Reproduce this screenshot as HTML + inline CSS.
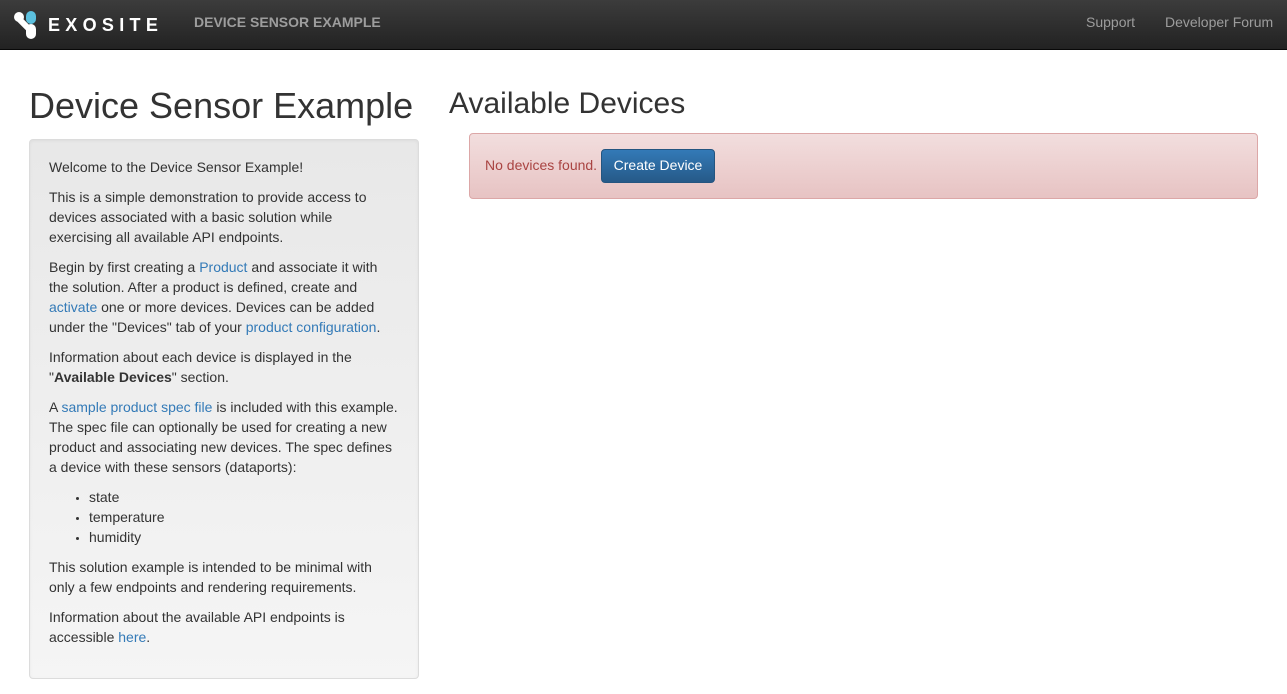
<!DOCTYPE html>
<html><head><style>
*{box-sizing:border-box}
body{margin:0;font-family:"Liberation Sans",sans-serif;font-size:14px;line-height:20px;color:#333;background:#fff;width:1287px;height:694px;overflow:hidden}
.nav{height:50px;background:linear-gradient(#3c3c3c,#222);border-bottom:1px solid #080808;position:relative}
.brand{position:absolute;left:48px;top:13px;color:#fff;font-size:18px;letter-spacing:5.3px;font-weight:bold;line-height:24px}
.title{position:absolute;left:194px;top:12px;color:#9d9d9d;font-weight:bold;font-size:14px;line-height:20px}
.right{position:absolute;top:12px;color:#9d9d9d}
h1{position:absolute;left:29px;top:84px;margin:0;font-size:36px;font-weight:500;line-height:44px;color:#333}
h2{position:absolute;left:449px;top:86px;margin:0;font-size:30px;font-weight:500;line-height:36px}
.well{position:absolute;left:29px;top:139px;width:390px;height:540px;border:1px solid #dcdcdc;border-radius:4px;background:linear-gradient(#e8e8e8,#f5f5f5);padding:17px 19px;box-shadow:inset 0 1px 3px rgba(0,0,0,.05)}
.well p{margin:0 0 10px}
a{color:#337ab7;text-decoration:none}
ul{margin:0 0 10px;padding-left:40px;list-style:none}
li{position:relative}
li:before{content:"";position:absolute;left:-13px;top:10px;width:3px;height:3px;background:#333;border-radius:50%}
.alert{position:absolute;left:469px;top:133px;width:789px;height:66px;border:1px solid #dca7a7;border-radius:4px;background:linear-gradient(#f2dede,#e7c3c3);color:#a94442;padding:21px 15px}
.btn{position:absolute;left:131px;top:15px;width:114px;height:34px;border:1px solid #245580;border-radius:4px;background:linear-gradient(#337ab7,#265a88);color:#fff;text-align:center;line-height:30px}
</style></head><body>
<div class="nav">
<svg style="position:absolute;left:13px;top:10px" width="24" height="30" viewBox="0 0 24 30"><circle cx="6" cy="7" r="5" fill="#fff"/><rect x="13" y="1" width="10" height="13" rx="5" fill="#5bc0de"/><rect x="13" y="14" width="10" height="15" rx="5" fill="#fff"/><path d="M6 9 L17 20" stroke="#fff" stroke-width="6"/></svg>
<div class="brand">EXOSITE</div>
<div class="title">DEVICE SENSOR EXAMPLE</div>
<div class="right" style="left:1086px">Support</div>
<div class="right" style="left:1165px">Developer Forum</div>
</div>
<h1>Device Sensor Example</h1>
<div class="well">
<p>Welcome to the Device Sensor Example!</p>
<p>This is a simple demonstration to provide access to devices associated with a basic solution while exercising all available API endpoints.</p>
<p>Begin by first creating a <a>Product</a> and associate it with the solution. After a product is defined, create and <a>activate</a> one or more devices. Devices can be added under the "Devices" tab of your <a>product configuration</a>.</p>
<p>Information about each device is displayed in the "<b>Available Devices</b>" section.</p>
<p>A <a>sample product spec file</a> is included with this example. The spec file can optionally be used for creating a new product and associating new devices. The spec defines a device with these sensors (dataports):</p>
<ul><li>state</li><li>temperature</li><li>humidity</li></ul>
<p>This solution example is intended to be minimal with only a few endpoints and rendering requirements.</p>
<p>Information about the available API endpoints is accessible <a>here</a>.</p>
</div>
<h2>Available Devices</h2>
<div class="alert">No devices found.<div class="btn">Create Device</div></div>
</body></html>
